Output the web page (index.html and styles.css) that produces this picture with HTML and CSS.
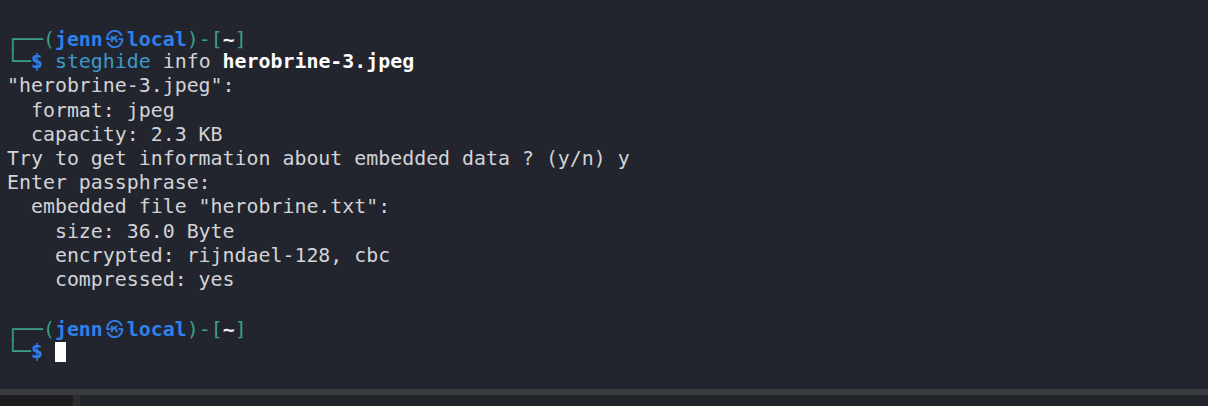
FILE: index.html
```html
<!DOCTYPE html>
<html>
<head>
<meta charset="utf-8">
<link rel="stylesheet" href="styles.css">
</head>
<body>
<div class="window">
  <div class="term">
    <div class="line"><span class="frame">┌──(</span><span class="host">jenn<span class="at">㉿</span>local</span><span class="frame">)-[</span><span class="dir">~</span><span class="frame">]</span></div>
    <div class="line"><span class="frame">└─</span><span class="host">$</span> <span class="cmd">steghide</span> info <span class="arg">herobrine-3.jpeg</span></div>
    <div class="line">"herobrine-3.jpeg":</div>
    <div class="line">  format: jpeg</div>
    <div class="line">  capacity: 2.3 KB</div>
    <div class="line">Try to get information about embedded data ? (y/n) y</div>
    <div class="line">Enter passphrase:</div>
    <div class="line">  embedded file "herobrine.txt":</div>
    <div class="line">    size: 36.0 Byte</div>
    <div class="line">    encrypted: rijndael-128, cbc</div>
    <div class="line">    compressed: yes</div>
    <div class="line"> </div>
    <div class="line"><span class="frame">┌──(</span><span class="host">jenn<span class="at">㉿</span>local</span><span class="frame">)-[</span><span class="dir">~</span><span class="frame">]</span></div>
    <div class="line"><span class="frame">└─</span><span class="host">$</span> <span class="cursor"></span></div>
  </div>
  <div class="hbar"></div>
  <div class="taskbar">
    <div class="tb-left"></div>
    <div class="tb-sep"></div>
    <div class="tb-rest"></div>
  </div>
</div>
</body>
</html>
```
FILE: styles.css
```css
html, body {
  margin: 0;
  padding: 0;
  background: #23252e;
  height: 100%;
}
.window {
  width: 1208px;
  height: 406px;
  display: flex;
  flex-direction: column;
  overflow: hidden;
}
.term {
  height: 389px;
  flex: none;
  box-sizing: border-box;
  padding: 26px 0 0 7px;
  background: #23252e;
  color: #d2d3d6;
  font-family: "DejaVu Sans Mono", "Noto Sans CJK JP", monospace;
  font-size: 19.9px;
  line-height: 24.2px;
}
.line {
  height: 24.2px;
  white-space: pre;
}
.frame {
  color: #3a9e86;
}
.host {
  color: #2f80e8;
  font-weight: bold;
}
.at {
  display: inline-block;
  width: 24px;
  text-align: center;
  font-family: "Noto Sans CJK JP", sans-serif;
  font-weight: bold;
  font-size: 18px;
}
.dir {
  color: #eeeeee;
  font-weight: bold;
}
.cmd {
  color: #3e98c6;
}
.arg {
  color: #ffffff;
  font-weight: bold;
}
.cursor {
  display: inline-block;
  width: 11px;
  height: 20px;
  background: #ffffff;
  vertical-align: -4px;
}
.hbar {
  height: 6px;
  flex: none;
  background: #3a3b3e;
}
.taskbar {
  flex: 1;
  display: flex;
}
.tb-left {
  width: 73px;
  background: #1c1d1f;
}
.tb-sep {
  width: 7px;
  background: #2c2d31;
}
.tb-rest {
  flex: 1;
  background: #22242c;
}
```
